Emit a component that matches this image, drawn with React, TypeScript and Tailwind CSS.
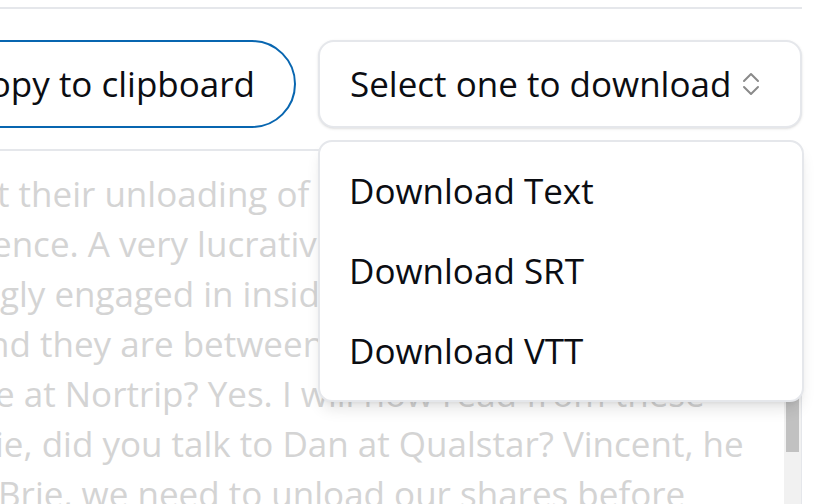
import React from "react";

const lines: { text: string; ml: string }[] = [
  { text: "t their unloading of shares before the public announcement", ml: "-ml-[3px]" },
  { text: "ence. A very lucrative arrangement for everyone involved", ml: "-ml-[8px]" },
  { text: "gly engaged in insider trading with these companies", ml: "ml-0" },
  { text: "nd they are between the two of them all the time", ml: "-ml-[12px]" },
  { text: "e at Nortrip? Yes. I will now read from these", ml: "-ml-[5px]" },
  { text: "ie, did you talk to Dan at Qualstar? Vincent, he", ml: "-ml-[5px]" },
  { text: "Brie, we need to unload our shares before", ml: "-ml-[2px]" },
];

export default function App() {
  return (
    <div className="w-[838px] h-[504px] overflow-hidden bg-white font-['Open_Sans',sans-serif] text-[#0b0d12]">
      <div className="mr-[36px]">
        <div className="h-[2px] mt-[7px] bg-[#e5e7eb]" />
        <div className="mt-[31px] flex justify-end gap-[22px]">
          <button className="shrink-0 h-[88px] rounded-full border-2 border-[#0866b0] pl-[38px] pr-[39px] text-[35px] whitespace-nowrap bg-white">
            Copy to clipboard
          </button>
          <div className="relative shrink-0 w-[484px]">
            <button className="h-[88px] w-full rounded-[16px] border-2 border-[#e5e7eb] bg-white shadow-sm flex items-center pl-[30px] text-[35px] whitespace-nowrap">
              <span>Select one to download</span>
              <svg width="18" height="26" viewBox="0 0 18 26" fill="none" stroke="#8a8a8a" strokeWidth="2" strokeLinecap="round" strokeLinejoin="round" className="ml-[11px]">
                <path d="M2 10 L9 3 L16 10" />
                <path d="M2 16 L9 23 L16 16" />
              </svg>
            </button>
            <div className="absolute z-10 top-[100px] left-0 w-[486px] rounded-[14px] border-2 border-[#e5e7eb] bg-white shadow-lg py-[9px]">
              {["Download Text", "Download SRT", "Download VTT"].map((t) => (
                <div key={t} className="h-[80px] flex items-center pl-[29px] text-[35px] whitespace-nowrap">
                  {t}
                </div>
              ))}
            </div>
          </div>
        </div>
        <div className="mt-[21px] h-[400px] flex border-t-2 border-r border-[#e5e7eb]">
          <div className="flex-1 overflow-hidden pt-[18px] text-[35px] leading-[50px] text-[#d4d4d4]">
            {lines.map((l, i) => (
              <div key={i} className={`whitespace-nowrap h-[50px] ${l.ml}`}>
                {l.text}
              </div>
            ))}
          </div>
          <div className="w-[17px] shrink-0 bg-[#f1f1f1] flex flex-col">
            <div className="mx-[2px] mt-[169px] h-[132px] bg-[#c1c1c1]" />
          </div>
        </div>
      </div>
    </div>
  );
}
